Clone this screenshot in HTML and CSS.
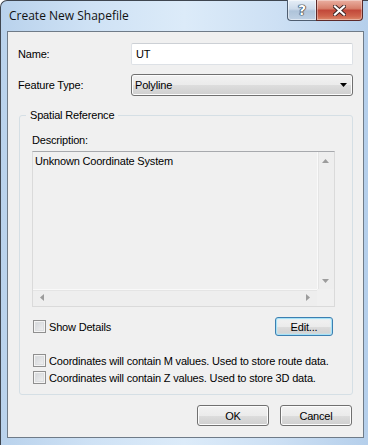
FILE: index.html
```html
<!DOCTYPE html>
<html lang="en">
<head>
    <meta charset="UTF-8">
    <title>Create New Shapefile</title>
    <link rel="stylesheet" href="styles.css">
</head>
<body>

<div class="window">
    <div class="titlebar">
        <span class="title">Create New Shapefile</span>
        <div class="caption-buttons">
            <div class="cap-btn help">?</div>
            <div class="cap-btn close">
                <svg width="13" height="11" viewBox="0 0 13 11">
                    <path d="M2 1.5 L11 9.5 M11 1.5 L2 9.5" stroke="#3b2424" stroke-width="4" stroke-linecap="square"/>
                    <path d="M2 1.5 L11 9.5 M11 1.5 L2 9.5" stroke="#fff" stroke-width="2.2" stroke-linecap="square"/>
                </svg>
            </div>
        </div>
    </div>

    <div class="client">
        <div class="field-row">
            <span class="field-label">Name:</span>
            <div class="textbox">UT</div>
        </div>
        <div class="field-row second">
            <span class="field-label">Feature Type:</span>
            <div class="combo">
                <span>Polyline</span>
                <svg width="7" height="4" viewBox="0 0 7 4"><polygon points="0,0 7,0 3.5,4" fill="#000"/></svg>
            </div>
        </div>

        <fieldset class="group">
            <legend>Spatial Reference</legend>
            <div class="desc-label">Description:</div>
            <div class="desc-box">
                <div class="desc-text">Unknown Coordinate System</div>
                <div class="vscroll">
                    <svg width="7" height="4" viewBox="0 0 7 4"><polygon points="0,4 3.5,0 7,4" fill="#9c9c9c"/></svg>
                    <svg width="7" height="4" viewBox="0 0 7 4"><polygon points="0,0 7,0 3.5,4" fill="#9c9c9c"/></svg>
                </div>
                <div class="hscroll">
                    <svg width="4" height="7" viewBox="0 0 4 7"><polygon points="4,0 4,7 0,3.5" fill="#9c9c9c"/></svg>
                    <svg width="4" height="7" viewBox="0 0 4 7"><polygon points="0,0 0,7 4,3.5" fill="#9c9c9c"/></svg>
                </div>
                <div class="corner"></div>
            </div>

            <div class="details-row">
                <label class="check"><span class="checkbox"></span>Show Details</label>
                <button class="btn default">Edit...</button>
            </div>
            <label class="check option"><span class="checkbox"></span>Coordinates will contain M values. Used to store route data.</label>
            <label class="check option"><span class="checkbox"></span>Coordinates will contain Z values. Used to store 3D data.</label>
        </fieldset>

        <div class="footer">
            <button class="btn wide">OK</button>
            <button class="btn wide">Cancel</button>
        </div>
    </div>
</div>

</body>
</html>
```

FILE: styles.css
```css
* {
    box-sizing: border-box;
}
body {
    margin: 0;
    font-family: "Liberation Sans", Arial, sans-serif;
    font-size: 11px;
    letter-spacing: -0.18px;
    color: #000;
}
.window {
    width: 368px;
    height: 445px;
    display: flex;
    flex-direction: column;
    padding: 0 4px 7px 6px;
    border-left: 1px solid #3f4650;
    border-top: 1px solid #3f4650;
    border-top-left-radius: 7px;
    background: linear-gradient(90deg, #b9d2ec 0%, #cfe2f5 25%, #dcebf9 50%, #cde0f4 75%, #b5cfeb 100%);
}
.titlebar {
    height: 30px;
    display: flex;
    justify-content: space-between;
    align-items: flex-start;
    padding-left: 2px;
}
.title {
    margin-top: 7px;
    font-family: "Open Sans", sans-serif;
    font-size: 12px;
    line-height: 16px;
    letter-spacing: 0;
    color: #111;
}
.caption-buttons {
    display: flex;
    margin-top: -1px;
    margin-right: 1px;
}
.cap-btn {
    height: 21px;
    display: flex;
    align-items: center;
    justify-content: center;
    border: 1px solid #4e5d70;
    border-top: none;
}
.help {
    width: 29px;
    border-right: none;
    border-bottom-left-radius: 4px;
    background: linear-gradient(#e6eef7 0%, #ccdaea 45%, #aec3d9 55%, #bfd1e4 100%);
    color: #fff;
    font-family: "DejaVu Sans", sans-serif;
    font-weight: bold;
    font-size: 14px;
    letter-spacing: 0;
    text-shadow: 0 0 1px #1d2a3a, 0 0 1px #1d2a3a, 0 0 1px #1d2a3a, 0 0 1px #1d2a3a;
    box-shadow: inset 0 0 0 1px rgba(255, 255, 255, 0.5);
}
.close {
    width: 47px;
    border-color: #5c2a2a;
    border-bottom-right-radius: 4px;
    background: linear-gradient(#eab0a2 0%, #d7806c 42%, #c2493a 52%, #cf634c 80%, #dc8a6c 100%);
    box-shadow: inset 0 0 0 1px rgba(255, 255, 255, 0.35);
}
.client {
    flex: 1;
    display: flex;
    flex-direction: column;
    padding: 11px 10px 0;
    border: 1px solid #6f7b88;
    background: #f0f0f0;
}
.field-row {
    display: flex;
    align-items: center;
    height: 22px;
}
.field-row.second {
    margin-top: 9px;
}
.field-label {
    width: 113px;
}
.textbox {
    width: 222px;
    height: 22px;
    padding-left: 4px;
    line-height: 20px;
    background: #fff;
    border: 1px solid #dde1e6;
    border-top-color: #ccd0d5;
    border-radius: 2px;
}
.combo {
    width: 222px;
    height: 22px;
    display: flex;
    align-items: center;
    justify-content: space-between;
    padding: 0 5px 0 3px;
    border: 1px solid #707070;
    border-radius: 3px;
    background: linear-gradient(#f2f2f2 0%, #ebebeb 50%, #dddddd 51%, #cfcfcf 100%);
    box-shadow: inset 0 0 0 1px #fcfcfc;
}
.group {
    margin: 12px 0 0 1px;
    padding: 0 17px 8px 12px;
    min-width: 0;
    border: 1px solid #d5dfe5;
    border-radius: 3px;
}
.group legend {
    margin-left: -6px;
    padding: 0 4px;
    line-height: 14px;
}
.desc-label {
    margin-top: 11px;
    line-height: 14px;
}
.desc-box {
    margin-top: 4px;
    height: 156px;
    display: grid;
    grid-template-columns: 1fr 17px;
    grid-template-rows: 1fr 17px;
    border: 1px solid #dadada;
    border-top-color: #a7a9ad;
    background: #f0f0f0;
}
.desc-text {
    padding: 2px 2px 0;
    line-height: 14px;
}
.vscroll {
    display: flex;
    flex-direction: column;
    align-items: center;
    justify-content: space-between;
    padding: 7px 0 6px;
    background: #eeeeee;
    box-shadow: inset 1px 0 0 #f9f9f9, inset 2px 0 0 #e4e4e4;
}
.hscroll {
    display: flex;
    align-items: center;
    justify-content: space-between;
    padding: 0 7px 0 7px;
    background: #eeeeee;
    box-shadow: inset 0 1px 0 #f9f9f9, inset 0 2px 0 #e4e4e4;
}
.corner {
    background: #f0f0f0;
}
.details-row {
    margin-top: 10px;
    height: 19px;
    display: flex;
    align-items: center;
    justify-content: space-between;
}
.check {
    display: flex;
    align-items: center;
    gap: 3px;
    margin-left: 1px;
}
.check.option {
    height: 17px;
}
.details-row + .check.option {
    margin-top: 16px;
}
.checkbox {
    width: 13px;
    height: 13px;
    border: 1px solid #8f8f8f;
    background: linear-gradient(135deg, #cfd2d6, #f4f4f4);
    box-shadow: inset 0 0 0 1px #f4f4f4, inset 0 0 0 2px #dcdee0;
}
.btn {
    height: 19px;
    width: 58px;
    margin: 0 2px 0 0;
    padding: 0;
    font-family: inherit;
    font-size: 11px;
    letter-spacing: -0.18px;
    color: #000;
    border: 1px solid #707070;
    border-radius: 3px;
    background: linear-gradient(#f2f2f2 0%, #ebebeb 50%, #dddddd 51%, #cfcfcf 100%);
    box-shadow: inset 0 0 0 1px #fcfcfc;
}
.btn.default {
    border-color: #3c7fb1;
    box-shadow: inset 0 0 0 1px #a6e2f7, inset 0 0 2px 1px #cfeefa;
}
.footer {
    margin-top: 10px;
    padding-right: 1px;
    display: flex;
    justify-content: flex-end;
    gap: 11px;
}
.btn.wide {
    width: 72px;
    height: 21px;
    margin: 0;
}
```
